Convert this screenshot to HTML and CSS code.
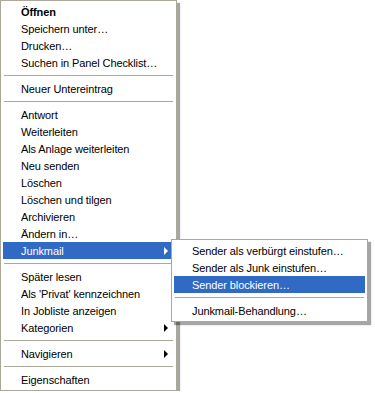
FILE: index.html
```html
<!DOCTYPE html>
<html lang="de">
<head>
<meta charset="utf-8">
<title>Kontextmenü</title>
<link rel="stylesheet" href="styles.css">
</head>
<body>
<div class="menu main">
  <div class="item bold">Öffnen</div>
  <div class="item">Speichern unter…</div>
  <div class="item">Drucken…</div>
  <div class="item">Suchen in Panel Checklist…</div>
  <div class="sep"></div>
  <div class="item">Neuer Untereintrag</div>
  <div class="sep"></div>
  <div class="item">Antwort</div>
  <div class="item">Weiterleiten</div>
  <div class="item">Als Anlage weiterleiten</div>
  <div class="item">Neu senden</div>
  <div class="item">Löschen</div>
  <div class="item">Löschen und tilgen</div>
  <div class="item">Archivieren</div>
  <div class="item">Ändern in…</div>
  <div class="item sub active">Junkmail<span class="arrow"></span>
    <div class="menu submenu">
      <div class="item">Sender als verbürgt einstufen…</div>
      <div class="item">Sender als Junk einstufen…</div>
      <div class="item active">Sender blockieren…</div>
      <div class="sep"></div>
      <div class="item">Junkmail-Behandlung…</div>
    </div>
  </div>
  <div class="sep"></div>
  <div class="item">Später lesen</div>
  <div class="item">Als 'Privat' kennzeichnen</div>
  <div class="item">In Jobliste anzeigen</div>
  <div class="item sub">Kategorien<span class="arrow"></span></div>
  <div class="sep"></div>
  <div class="item sub">Navigieren<span class="arrow"></span></div>
  <div class="sep"></div>
  <div class="item">Eigenschaften</div>
</div>
</body>
</html>
```
FILE: styles.css
```css
html, body {
  margin: 0;
  padding: 0;
  background: #ffffff;
}
body {
  font-family: Tahoma, "Liberation Sans", Arial, sans-serif;
  font-size: 11px;
  letter-spacing: -0.1px;
  color: #000;
}
.menu {
  background: #ffffff;
  border: 1px solid #aca899;
  padding: 2px;
  box-shadow: 3px 3px 1px rgba(0, 0, 0, 0.35);
}
.main {
  width: 171px;
}
.item {
  position: relative;
  height: 16px;
  padding-top: 1px;
  line-height: 17px;
  padding-left: 18px;
  white-space: nowrap;
}
.item.bold {
  font-weight: bold;
}
.item.active {
  background: #316ac5;
  color: #ffffff;
}
.sep {
  height: 1px;
  background: #aca899;
  margin: 4px 1px 4px 1px;
}
.arrow {
  position: absolute;
  right: 6px;
  top: 5px;
  width: 0;
  height: 0;
  border-top: 4px solid transparent;
  border-bottom: 4px solid transparent;
  border-left: 4px solid #000;
}
.active > .arrow {
  border-left-color: #fff;
}
.submenu {
  position: absolute;
  left: 168px;
  top: -3px;
  width: 191px;
  color: #000;
  z-index: 2;
}
.submenu .item {
  color: #000;
}
.submenu .item.active {
  color: #fff;
}
```
